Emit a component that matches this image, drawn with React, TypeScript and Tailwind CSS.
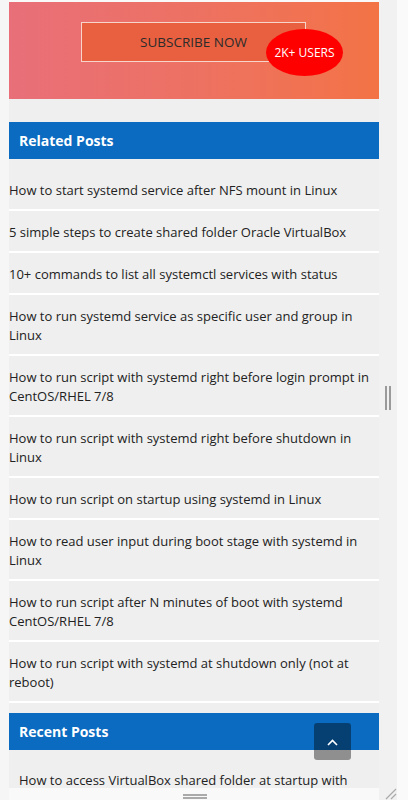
const related = [
  'How to start systemd service after NFS mount in Linux',
  '5 simple steps to create shared folder Oracle VirtualBox',
  '10+ commands to list all systemctl services with status',
  'How to run systemd service as specific user and group in Linux',
  'How to run script with systemd right before login prompt in CentOS/RHEL 7/8',
  'How to run script with systemd right before shutdown in Linux',
  'How to run script on startup using systemd in Linux',
  'How to read user input during boot stage with systemd in Linux',
  'How to run script after N minutes of boot with systemd CentOS/RHEL 7/8',
  'How to run script with systemd at shutdown only (not at reboot)',
];

const recent = [
  'How to access VirtualBox shared folder at startup with systemd in Linux',
];

function Header({ title }: { title: string }) {
  return (
    <div className="bg-[#0a6bc0] h-[37px] flex items-center px-[10px]">
      <h3 className="text-white font-bold text-[14px]">{title}</h3>
    </div>
  );
}

export default function App() {
  return (
    <div
      className="relative w-[408px] h-[800px] overflow-hidden bg-[#f9f9f9] text-[#222] flex"
      style={{ fontFamily: '"Open Sans", sans-serif' }}
    >
      <div className="w-[9px] shrink-0 bg-[#f6f6f6]" />
      <div className="w-[370px] shrink-0 mt-[2px] h-[786px] overflow-hidden bg-[#efefef] relative">
        <div className="h-[97px] bg-gradient-to-r from-[#e86f79] to-[#f37345] pt-[20px] relative">
          <div className="ml-[72px] w-[225px] h-[40px] bg-[#e8603f] border border-[#f7d5cb] flex items-center justify-center text-[13.5px] text-[#2b2b2b]">
            SUBSCRIBE NOW
          </div>
          <div className="absolute left-[257px] top-[27px] w-[77px] h-[47px] rounded-[50%] bg-[#ff0000] flex items-center justify-center text-white text-[12px]">
            2K+ USERS
          </div>
        </div>

        <div className="mt-[23px]">
          <Header title="Related Posts" />
          <ul className="mt-[10px]">
            {related.map(t => (
              <li key={t} className="pt-[12px] pb-[9px] border-b-2 border-white text-[13px] leading-[19px]">
                {t}
              </li>
            ))}
          </ul>
        </div>

        <div className="mt-[10px]">
          <Header title="Recent Posts" />
          <ul className="mt-[10px] px-[10px]">
            {recent.map(t => (
              <li key={t} className="pt-[11px] pb-[9px] text-[13px] leading-[19px]">
                {t}
              </li>
            ))}
          </ul>
        </div>

        <button className="absolute left-[305px] top-[721px] w-[37px] h-[37px] rounded-[3px] bg-black/40 flex items-center justify-center">
          <svg width="11" height="8" viewBox="0 0 11 8" fill="none">
            <path d="M1 7 L5.5 2.5 L10 7" stroke="white" strokeWidth="1.6" />
          </svg>
        </button>
      </div>
      <div className="w-[18px] shrink-0 bg-[#f1f1f1]" />
      <div className="flex-1 bg-[#fafafa]" />

      {/* resize handles */}
      <div className="absolute left-[385px] top-[386px] flex gap-[2px]">
        <div className="w-[2px] h-[24px] bg-[#9a9a9a]" />
        <div className="w-[2px] h-[24px] bg-[#9a9a9a]" />
      </div>
      <div className="absolute left-[183px] top-[794px] flex flex-col gap-[1px]">
        <div className="w-[24px] h-[2px] bg-[#aaa]" />
        <div className="w-[24px] h-[2px] bg-[#aaa]" />
      </div>
      <svg className="absolute left-[384px] top-[788px]" width="14" height="12" viewBox="0 0 14 12">
        <path d="M2 11 L12 1 M7 11 L12 6" stroke="#aaa" strokeWidth="1.2" />
      </svg>
    </div>
  );
}
